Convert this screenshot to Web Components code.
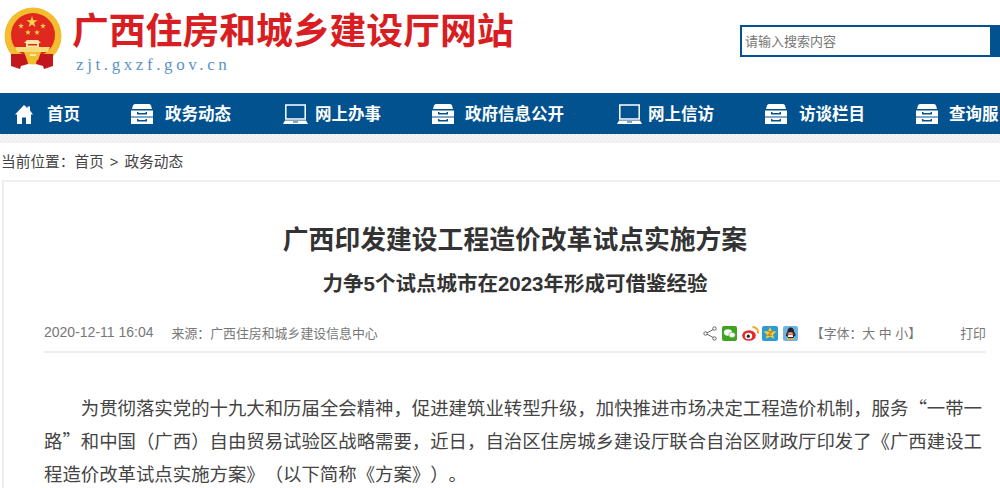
<!DOCTYPE html>
<html lang="zh-CN">
<head>
<meta charset="utf-8">
<title>广西印发建设工程造价改革试点实施方案</title>
<style>
  html, body { margin: 0; padding: 0; background: #fff; overflow: hidden; width: 1000px; height: 488px; }
  body { font-family: "Liberation Sans", "Noto Sans CJK SC", sans-serif; }
</style>
</head>
<body>
<site-header></site-header>
<site-nav></site-nav>
<bread-crumb></bread-crumb>
<article-card></article-card>

<script>
const ICONS = {
  home: `<svg width="18" height="19" viewBox="0 0 18 19"><path fill="#fff" d="M9 0 12.500 3.200V1.500H15V5.500L18 9.500H16V19H11V12.500H7V19H2V9.500H0Z"/></svg>`,
  box: `<svg width="22" height="20" viewBox="0 0 22 20"><path fill="#fff" d="M4 0H18Q19.500 0 20 1.500L21 5H1L2 1.500Q2.500 0 4 0Z"/><path fill="#fff" fill-rule="evenodd" d="M0 6.500H22V12.500H0ZM6 8V10.500H16V8H14.500V9H7.500V8Z"/><path fill="#fff" fill-rule="evenodd" d="M0 13.500H22V20H0ZM6 15V17.500H16V15H14.500V16H7.500V15Z"/></svg>`,
  laptop: `<svg width="25" height="20" viewBox="0 0 25 20"><path fill="none" stroke="#fff" stroke-width="1.500" d="M2.800 1H22.200V15H2.800Z"/><path fill="#fff" d="M2 16.500H23L25 20H0ZM10 17.500V18.600H15V17.500Z" fill-rule="evenodd"/></svg>`,
};

/* 国徽 — simplified, drawn in page coordinates */
const EMBLEM = `<svg width="72" height="72" viewBox="0 0 72 72">
  <circle cx="33" cy="36" r="28.500" fill="#f2bd2f"/>
  <circle cx="33" cy="35" r="22" fill="#e0281e"/>
  <path fill="#f7d54e" d="m32 16 1.300 4.200h4.400l-3.600 2.600 1.400 4.200-3.500-2.600-3.500 2.600 1.400-4.200-3.600-2.600h4.400z"/>
  <g fill="#f7d54e">
    <path d="m21 23 .7 2.100h2.200l-1.800 1.300.7 2.100-1.800-1.300-1.800 1.300.7-2.100-1.800-1.300h2.200z"/>
    <path d="m43 23 .7 2.100h2.200l-1.800 1.300.7 2.100-1.800-1.300-1.800 1.300.7-2.100-1.800-1.300h2.200z"/>
    <path d="m28 29.500 .7 2.100h2.200l-1.800 1.300.7 2.100-1.800-1.300-1.800 1.300.7-2.100-1.800-1.300h2.200z"/>
    <path d="m37 29.500 .7 2.100h2.200l-1.800 1.300.7 2.100-1.800-1.300-1.800 1.300.7-2.100-1.800-1.300h2.200z"/>
  </g>
  <path fill="#f8e6a4" d="M27 40H38L41 43H39V47H26V43H24Z"/>
  <path fill="#e0281e" d="M28 44H37V45.500H28Z"/>
  <path fill="#f7dc7c" d="M15 47H50L48 52H17Z"/>
  <path fill="#c3161c" d="M11 54 26 54 28 64 21 66 20 69 11 66Z"/>
  <path fill="#c3161c" d="M53 54 38 54 36 64 43 66 44 69 53 66Z"/>
  <path fill="#f2bd2f" d="M24 52H41L38 60 33 62 27 60Z"/>
  <path fill="#fbe9a8" d="M30 54H36V56H30Z"/>
</svg>`;

class SiteHeader extends HTMLElement {
  constructor() {
    super();
    this.attachShadow({ mode: 'open' });
    this.shadowRoot.innerHTML = `
      <style>
        :host { display: flex; height: 93px; box-sizing: border-box; justify-content: space-between; }
        .brand { display: flex; }
        .logo { width: 72px; height: 72px; }
        svg { display: block; }
        .names { display: flex; flex-direction: column; }
        h1 { margin: 12px 0 0; font: 700 36.800px/40px "Liberation Sans", "Noto Sans CJK SC", sans-serif; color: #d81e22; white-space: nowrap; }
        .url { margin: 4px 0 0 4px; font: 17px/18px "Liberation Serif", serif; letter-spacing: 3.600px; color: #5b93c7; }
        .search { display: flex; margin-top: 25px; width: 260px; height: 32px; box-sizing: border-box;
          border: 2px solid #02528f; }
        .field { flex: 1; font-size: 13px; line-height: 29px; color: #777; padding-left: 3px; }
        .btn { width: 8px; background: #02528f; }
      </style>
      <div class="brand">
        <div class="logo">${EMBLEM}</div>
        <div class="names">
          <h1>广西住房和城乡建设厅网站</h1>
          <div class="url">zjt.gxzf.gov.cn</div>
        </div>
      </div>
      <div class="search"><div class="field">请输入搜索内容</div><div class="btn"></div></div>`;
  }
}

class NavItem extends HTMLElement {
  constructor() {
    super();
    this.attachShadow({ mode: 'open' });
  }
  connectedCallback() {
    const icon = this.getAttribute('icon');
    this.shadowRoot.innerHTML = `
      <style>
        :host { display: flex; align-items: center; flex-shrink: 0; color: #fff; font: 700 16.500px/41px "Liberation Sans", "Noto Sans CJK SC", sans-serif; white-space: nowrap; gap: var(--icon-gap, 12px); }
        svg { display: block; }
      </style>
      ${ICONS[icon]}<slot></slot>`;
  }
}

class SiteNav extends HTMLElement {
  constructor() {
    super();
    this.attachShadow({ mode: 'open' });
    this.shadowRoot.innerHTML = `
      <style>
        :host { display: block; }
        .bar { display: flex; gap: 51px; height: 40px; padding: 1px 0 0 15px; background: #02528f; overflow: hidden; }
        .strip { height: 9px; background: repeating-conic-gradient(#eee 0 25%, #f5f5f5 0 50%) 0 0 / 4px 4px; }
      </style>
      <div class="bar">
        <nav-item icon="home" style="--icon-gap:14px">首页</nav-item>
        <nav-item icon="box">政务动态</nav-item>
        <nav-item icon="laptop" style="--icon-gap:7px;margin-left:1px">网上办事</nav-item>
        <nav-item icon="box" style="--icon-gap:11px">政府信息公开</nav-item>
        <nav-item icon="laptop" style="--icon-gap:6px;margin-left:2px">网上信访</nav-item>
        <nav-item icon="box">访谈栏目</nav-item>
        <nav-item icon="box" style="--icon-gap:11px">查询服</nav-item>
      </div>
      <div class="strip"></div>`;
  }
}

class BreadCrumb extends HTMLElement {
  constructor() {
    super();
    this.attachShadow({ mode: 'open' });
    this.shadowRoot.innerHTML = `
      <style>
        :host { display: block; height: 37px; padding-left: 1px; font-size: 14.700px; line-height: 38px; color: #444; }
        span { margin: 0 6px; }
      </style>当前位置：首页<span>&gt;</span>政务动态`;
  }
}

class ShareIcons extends HTMLElement {
  constructor() {
    super();
    this.attachShadow({ mode: 'open' });
    this.shadowRoot.innerHTML = `
      <style>
        :host { display: flex; align-items: center; gap: 5px; padding-top: 3px; }
        svg { display: block; }
        .weibo { margin-right: -2px; }
      </style>
      <svg width="14" height="15" viewBox="0 0 14 15" fill="none" stroke="#666"><path d="M11 3 3 7.500 11 12"/><circle cx="11.500" cy="2.500" r="1.700" fill="#fff"/><circle cx="2.500" cy="7.500" r="1.700" fill="#fff"/><circle cx="11.500" cy="12.500" r="1.700" fill="#fff"/></svg>
      <svg width="15" height="15" viewBox="0 0 15 15"><rect width="15" height="15" rx="2" fill="#3fa31f"/><ellipse cx="6" cy="6.500" rx="4" ry="3.300" fill="#fff"/><ellipse cx="10" cy="9" rx="3.300" ry="2.700" fill="#fff" stroke="#3fa31f" stroke-width=".6"/></svg>
      <svg class="weibo" width="17" height="15" viewBox="0 0 17 15"><ellipse cx="7" cy="9.500" rx="6.800" ry="5.300" fill="#e6262a"/><ellipse cx="6.500" cy="10" rx="3.700" ry="3.200" fill="#fff"/><circle cx="6.300" cy="10.200" r="1.600" fill="#222"/><path d="M10.500 1a5.500 5.500 0 0 1 5.500 6.500" fill="none" stroke="#f3a41c" stroke-width="1.800"/></svg>
      <svg width="16" height="15" viewBox="0 0 16 15"><rect width="16" height="15" rx="2" fill="#2b9ad8"/><path fill="#f8d12c" d="m8 1 1.900 4.200 4.700.3-3.600 2.900 1.200 4.400-4.200-2.400-4.200 2.400 1.200-4.400-3.600-2.900 4.700-.3z"/><path fill="none" stroke="#c9701a" stroke-width="1.100" d="M6 5.800H10L6 9.200H10"/></svg>
      <svg width="15" height="15" viewBox="0 0 15 15"><rect width="15" height="15" rx="2" fill="#6db4e6"/><path fill="#222" d="M7.500 1.500c2.500 0 3.500 2 3.500 4 1 1.500 2 3.500 1.200 5l-1-.7c0 1-.4 1.700-1 2.200H5.300c-.6-.5-1-1.200-1-2.200l-1 .7c-.8-1.500.2-3.500 1.200-5 0-2 1-4 3-4z"/><path fill="#fff" d="M5.500 6.500h4l.5 4.500H5z"/><path fill="#e23b2e" d="M4 7.500h7v1.300H4z"/><path fill="#f7a81c" d="M4 12h3v1.500H4zM8 12h3v1.500H8z"/></svg>`;
  }
}

class ArticleCard extends HTMLElement {
  constructor() {
    super();
    this.attachShadow({ mode: 'open' });
    this.shadowRoot.innerHTML = `
      <style>
        :host { display: block; margin-left: 2px; border-left: 2px solid #eee; border-top: 2px solid #eee; padding: 0 14px 0 40px; color: #333; }
        h2 { margin: 0; padding-top: 40px; text-align: center; font-size: 25.800px; line-height: 36px; font-weight: 700; color: #333; }
        h3 { margin: 0; padding-top: 12px; text-align: center; font-size: 20.500px; line-height: 28px; font-weight: 700; color: #333; }
        .meta { display: flex; align-items: center; height: 38px; margin-top: 15px; border-bottom: 2px solid #eee; font-size: 12.900px; color: #777; white-space: nowrap; }
        .date { font-size: 14px; margin-right: 18px; }
        share-icons { margin-left: 325px; }
        .size { margin-left: 13px; }
        .print { margin-left: auto; }
        p { margin: 37.500px 0 0; font-family: "Noto Sans CJK SC", sans-serif; font-size: 18.400px; line-height: 33.200px; color: #444; text-indent: 2em; text-spacing-trim: space-all; }
      </style>
      <h2>广西印发建设工程造价改革试点实施方案</h2>
      <h3>力争5个试点城市在2023年形成可借鉴经验</h3>
      <div class="meta">
        <span class="date">2020-12-11 16:04</span>
        <span>来源：广西住房和城乡建设信息中心</span>
        <share-icons></share-icons>
        <span class="size">【字体：大 中 小】</span>
        <span class="print">打印</span>
      </div>
      <p>为贯彻落实党的十九大和历届全会精神，促进建筑业转型升级，加快推进市场决定工程造价机制，服务“一带一路”和中国（广西）自由贸易试验区战略需要，近日，自治区住房城乡建设厅联合自治区财政厅印发了《广西建设工程造价改革试点实施方案》（以下简称《方案》）。</p>`;
  }
}

customElements.define('site-header', SiteHeader);
customElements.define('nav-item', NavItem);
customElements.define('site-nav', SiteNav);
customElements.define('bread-crumb', BreadCrumb);
customElements.define('share-icons', ShareIcons);
customElements.define('article-card', ArticleCard);
</script>
</body>
</html>
